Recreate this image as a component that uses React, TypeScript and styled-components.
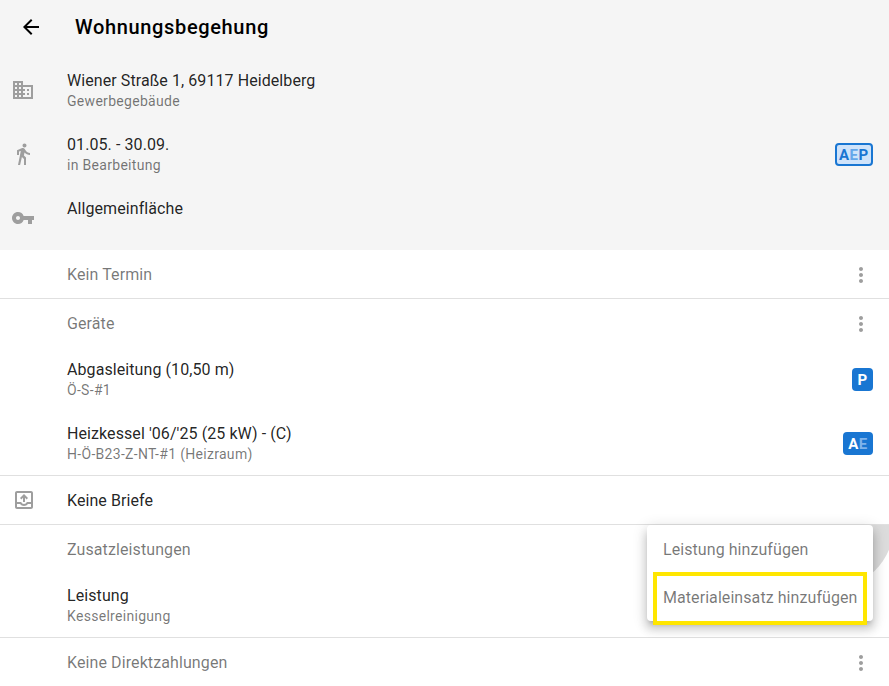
import React from 'react';
import styled, { createGlobalStyle } from 'styled-components';
import { MdArrowBack, MdBusiness, MdDirectionsWalk, MdVpnKey, MdMoreVert, MdOutlineOutbox } from 'react-icons/md';

const GlobalStyle = createGlobalStyle`
  html, body {
    margin: 0;
    padding: 0;
    background: #fff;
    overflow: hidden;
  }
  body {
    font-family: Roboto, "Liberation Sans", sans-serif;
    color: rgba(0, 0, 0, 0.87);
  }
`;

const Page = styled.div`
  position: relative;
  width: 889px;
  height: 686px;
  overflow: hidden;
`;

const Header = styled.div`
  background: #f5f5f5;
  height: 250px;
`;

const TitleBar = styled.div`
  display: flex;
  align-items: center;
  height: 54px;
  padding-left: 19px;
  color: #000;
  font-size: 20px;
  font-weight: 500;
  letter-spacing: 0.65px;
  svg {
    width: 24px;
    height: 24px;
    margin-right: 32px;
  }
`;

const Row = styled.div<{ $h: number }>`
  display: flex;
  align-items: flex-start;
  height: ${(p) => p.$h}px;
  padding: 0 16px 0 11px;
  box-sizing: border-box;
`;

const Section = styled.div`
  border-bottom: 1px solid #e0e0e0;
  &:last-child {
    border-bottom: none;
  }
`;

const IconSlot = styled.div<{ $top?: number }>`
  width: 56px;
  height: 24px;
  flex-shrink: 0;
  margin-top: ${(p) => p.$top ?? 0}px;
  color: #9e9e9e;
  svg {
    display: block;
    width: 24px;
    height: 24px;
  }
`;

const BriefIcon = styled.span`
  display: block;
  margin-left: 1px;
`;

const TextBlock = styled.div<{ $top: number }>`
  flex: 1;
  margin-top: ${(p) => p.$top}px;
`;

const Primary = styled.div`
  font-size: 16px;
  line-height: 24px;
  letter-spacing: 0.08px;
`;

const Secondary = styled.div`
  font-size: 14px;
  line-height: 17px;
  letter-spacing: 0.3px;
  color: rgba(0, 0, 0, 0.54);
`;

const SectionTitle = styled.div`
  flex: 1;
  font-size: 16px;
  line-height: 24px;
  letter-spacing: 0.1px;
  margin-top: 13px;
  color: rgba(0, 0, 0, 0.54);
`;

const Dots = styled.div`
  margin-top: 13px;
  width: 24px;
  height: 24px;
  color: #9e9e9e;
  svg {
    display: block;
    width: 24px;
    height: 24px;
  }
`;

const Badges = styled.div<{ $top: number; $outlined?: boolean }>`
  display: flex;
  align-items: center;
  height: 23px;
  margin-top: ${(p) => p.$top}px;
  padding: 0 ${(p) => (p.$outlined ? 2.5 : 5.5)}px;
  box-sizing: border-box;
  border-radius: 4px;
  font-size: 15px;
  font-weight: 700;
  letter-spacing: 0.4px;
  background: ${(p) => (p.$outlined ? '#cfe3fa' : '#1976d2')};
  border: ${(p) => (p.$outlined ? '2px solid #1976d2' : 'none')};
  color: ${(p) => (p.$outlined ? '#1976d2' : '#fff')};
`;

const FadedLetter = styled.span<{ $outlined?: boolean }>`
  color: ${(p) => (p.$outlined ? '#64a7ea' : '#7fb3ea')};
`;

const RippleClip = styled.div`
  position: absolute;
  left: 760px;
  top: 525px;
  width: 129px;
  height: 60px;
  overflow: hidden;
`;

const Ripple = styled.div`
  position: absolute;
  left: 6px;
  top: -64px;
  width: 128px;
  height: 128px;
  border-radius: 50%;
  background: #dcdcdc;
`;

const Menu = styled.div`
  position: absolute;
  left: 647px;
  top: 525px;
  width: 226px;
  height: 96px;
  background: #fff;
  border-radius: 4px;
  box-shadow: 0 5px 5px -3px rgba(0, 0, 0, 0.2), 0 8px 10px 1px rgba(0, 0, 0, 0.14), 0 3px 14px 2px rgba(0, 0, 0, 0.12);
`;

const MenuItem = styled.div`
  height: 48px;
  padding-left: 16px;
  display: flex;
  align-items: center;
  font-size: 16px;
  letter-spacing: 0.07px;
  color: rgba(0, 0, 0, 0.54);
`;

const Highlight = styled.div`
  position: absolute;
  left: 653px;
  top: 572px;
  width: 214px;
  height: 53px;
  box-sizing: border-box;
  border: 4px solid #ffe600;
`;

export default function App() {
  return (
    <Page>
      <GlobalStyle />
      <Header>
        <TitleBar>
          <MdArrowBack />
          Wohnungsbegehung
        </TitleBar>
        <Row $h={64}>
          <IconSlot $top={24}><MdBusiness /></IconSlot>
          <TextBlock $top={15}>
            <Primary>Wiener Straße 1, 69117 Heidelberg</Primary>
            <Secondary>Gewerbegebäude</Secondary>
          </TextBlock>
        </Row>
        <Row $h={64}>
          <IconSlot $top={24}><MdDirectionsWalk /></IconSlot>
          <TextBlock $top={15}>
            <Primary>01.05. - 30.09.</Primary>
            <Secondary>in Bearbeitung</Secondary>
          </TextBlock>
          <Badges $top={25} $outlined>
            A<FadedLetter $outlined>E</FadedLetter>P
          </Badges>
        </Row>
        <Row $h={64}>
          <IconSlot $top={24}><MdVpnKey /></IconSlot>
          <TextBlock $top={15}>
            <Primary>Allgemeinfläche</Primary>
          </TextBlock>
        </Row>
      </Header>

      <Section>
        <Row $h={48}>
          <IconSlot />
          <SectionTitle>Kein Termin</SectionTitle>
          <Dots><MdMoreVert /></Dots>
        </Row>
      </Section>

      <Section>
        <Row $h={48}>
          <IconSlot />
          <SectionTitle>Geräte</SectionTitle>
          <Dots><MdMoreVert /></Dots>
        </Row>
        <Row $h={64}>
          <IconSlot />
          <TextBlock $top={11}>
            <Primary>Abgasleitung (10,50 m)</Primary>
            <Secondary>Ö-S-#1</Secondary>
          </TextBlock>
          <Badges $top={21}>P</Badges>
        </Row>
        <Row $h={64}>
          <IconSlot />
          <TextBlock $top={11}>
            <Primary>Heizkessel '06/'25 (25 kW) - (C)</Primary>
            <Secondary>H-Ö-B23-Z-NT-#1 (Heizraum)</Secondary>
          </TextBlock>
          <Badges $top={21}>
            A<FadedLetter>E</FadedLetter>
          </Badges>
        </Row>
      </Section>

      <Section>
        <Row $h={48}>
          <IconSlot $top={12}><BriefIcon><MdOutlineOutbox /></BriefIcon></IconSlot>
          <TextBlock $top={13}>
            <Primary>Keine Briefe</Primary>
          </TextBlock>
        </Row>
      </Section>

      <Section>
        <Row $h={48}>
          <IconSlot />
          <SectionTitle>Zusatzleistungen</SectionTitle>
        </Row>
        <Row $h={64}>
          <IconSlot />
          <TextBlock $top={11}>
            <Primary>Leistung</Primary>
            <Secondary>Kesselreinigung</Secondary>
          </TextBlock>
        </Row>
      </Section>

      <Section>
        <Row $h={48}>
          <IconSlot />
          <SectionTitle>Keine Direktzahlungen</SectionTitle>
          <Dots><MdMoreVert /></Dots>
        </Row>
      </Section>

      <RippleClip><Ripple /></RippleClip>
      <Menu>
        <MenuItem>Leistung hinzufügen</MenuItem>
        <MenuItem>Materialeinsatz hinzufügen</MenuItem>
      </Menu>
      <Highlight />
    </Page>
  );
}
